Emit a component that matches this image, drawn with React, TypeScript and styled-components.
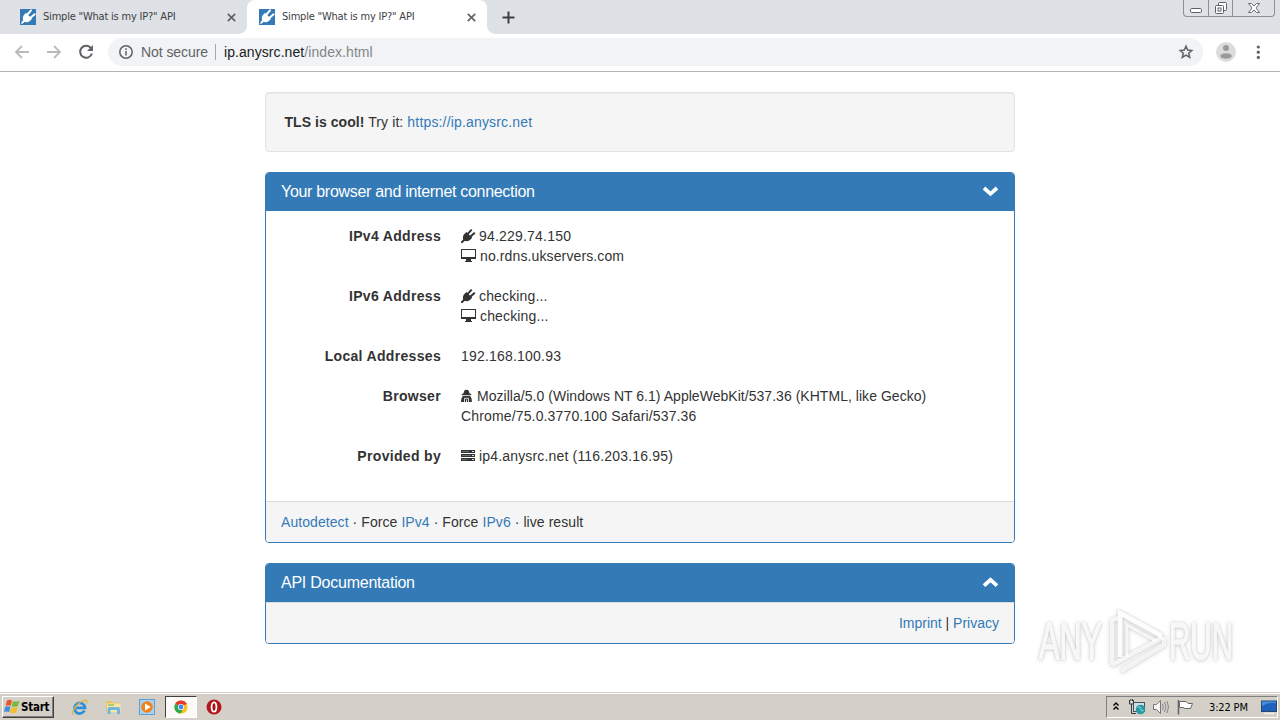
import React from "react";
import styled, { createGlobalStyle } from "styled-components";

const GlobalStyle = createGlobalStyle`
  * {
    box-sizing: border-box;
  }

  body {
    margin: 0;
    background: #fff;
    font-family: "Liberation Sans", Arial, sans-serif;
    font-size: 14px;
    line-height: 20px;
    color: #333;
    overflow: hidden;
  }

  svg {
    display: block;
    flex: none;
  }
`;

const Screen = styled.div`
  position: relative;
  display: flex;
  flex-direction: column;
  width: 1280px;
  height: 720px;
`;

/* ====== browser chrome ====== */

const TabStrip = styled.div`
  display: flex;
  height: 34px;
  padding-left: 8px;
  background: #dee1e6;
`;

const TabBox = styled.div<{ $active?: boolean }>`
  position: relative;
  display: flex;
  align-items: center;
  width: ${(p) => (p.$active ? 240 : 239)}px;
  padding: 0 11px 0 12px;
  border-radius: 8px 8px 0 0;
  background: ${(p) => (p.$active ? "#fff" : "transparent")};

  &::before,
  &::after {
    content: "";
    display: ${(p) => (p.$active ? "block" : "none")};
    position: absolute;
    bottom: 0;
    width: 8px;
    height: 8px;
  }

  &::before {
    left: -8px;
    background: radial-gradient(circle at 0 0, transparent 7.5px, #fff 8px);
  }

  &::after {
    right: -8px;
    background: radial-gradient(circle at 100% 0, transparent 7.5px, #fff 8px);
  }
`;

const TabTitle = styled.span`
  flex: 1;
  margin-left: 7px;
  font-family: "DejaVu Sans Condensed", "DejaVu Sans", sans-serif;
  font-stretch: condensed;
  font-size: 11px;
  letter-spacing: -0.2px;
  white-space: nowrap;
  color: #3c4043;
`;

const NewTab = styled.div`
  display: flex;
  align-items: center;
  margin-left: 15px;
`;

const WindowButtons = styled.div`
  display: flex;
  width: 92px;
  height: 17px;
  margin: 0 5px 0 auto;
  border: 1px solid #8b8f98;
  border-top: 0;
  border-radius: 0 0 4px 4px;
`;

const WindowButton = styled.div<{ $width: number }>`
  display: flex;
  justify-content: center;
  width: ${(p) => p.$width}px;
  border-right: 1px solid #8b8f98;

  &:last-child {
    border-right: 0;
  }
`;

const Toolbar = styled.div`
  display: flex;
  align-items: center;
  height: 38px;
  padding: 0 12px 1px 13px;
  border-bottom: 1px solid #b3b4b6;
  background: #fff;
`;

const NavButtons = styled.div`
  display: flex;
  gap: 14px;
  width: 95px;
`;

const Omnibox = styled.div`
  display: flex;
  align-items: center;
  width: 1095px;
  height: 28px;
  padding: 0 9px 0 10px;
  border-radius: 14px;
  background: #f1f3f4;
`;

const Security = styled.span`
  width: 75px;
  margin-left: 7px;
  border-right: 1px solid #a5a8ab;
  line-height: 16px;
  letter-spacing: -0.07px;
  color: #5f6368;
`;

const Url = styled.span`
  flex: 1;
  margin-left: 8px;
  letter-spacing: 0.07px;
  color: #80868b;

  b {
    font-weight: 400;
    color: #202124;
  }
`;

const ToolbarEnd = styled.div`
  display: flex;
  align-items: center;
  gap: 12px;
  margin-left: 13px;
`;

/* ====== page ====== */

const Page = styled.main`
  flex: 1;
  display: flex;
  flex-direction: column;
  gap: 20px;
  width: 750px;
  margin: 0 auto;
  padding-top: 20px;
`;

const Well = styled.div`
  height: 60px;
  padding: 19px 18.5px;
  border: 1px solid #e3e3e3;
  border-radius: 4px;
  background: #f5f5f5;
  box-shadow: inset 0 1px 1px rgba(0, 0, 0, 0.05);
  letter-spacing: 0.1px;

  strong {
    letter-spacing: 0.05px;
  }

  a {
    letter-spacing: 0.17px;
  }
`;

const Panel = styled.section`
  border: 1px solid #337ab7;
  border-radius: 4px;
  overflow: hidden;
`;

const PanelHeading = styled.div`
  display: flex;
  align-items: center;
  justify-content: space-between;
  height: 38px;
  padding: 0 15px;
  background: #337ab7;
  color: #fff;
`;

const PanelTitle = styled.h3<{ $spacing: number }>`
  margin: 0;
  font-size: 16px;
  font-weight: 400;
  letter-spacing: ${(p) => p.$spacing}px;
`;

const PanelBody = styled.dl`
  display: grid;
  grid-template-columns: 160px 1fr;
  gap: 20px;
  margin: 0;
  padding: 15px 15px 35px;
`;

const Term = styled.dt`
  text-align: right;
  font-weight: 700;
  letter-spacing: 0.32px;
`;

const Detail = styled.dd`
  margin: 0;
`;

const Line = styled.div<{ $spacing?: number }>`
  display: flex;
  align-items: center;
  height: 20px;
  letter-spacing: ${(p) => p.$spacing ?? 0.15}px;
  white-space: pre;
`;

const PanelFooter = styled.div<{ $right?: boolean; $spacing?: number }>`
  height: 41px;
  padding: 10px 15px;
  border-top: 1px solid #ddd;
  background: #f5f5f5;
  text-align: ${(p) => (p.$right ? "right" : "left")};
  letter-spacing: ${(p) => p.$spacing ?? 0}px;
`;

const Link = styled.a`
  color: #337ab7;
  text-decoration: none;
`;

/* ====== watermark ====== */

const Watermark = styled.div`
  position: absolute;
  left: 1039px;
  top: 609px;
  display: flex;
  align-items: center;
  height: 66px;
  color: #fff;
  filter: drop-shadow(0 0 1px rgba(0, 0, 0, 0.18))
    drop-shadow(0 1px 2px rgba(0, 0, 0, 0.16));
`;

const WatermarkWord = styled.span<{ $width: number; $scale: number }>`
  width: ${(p) => p.$width}px;
  font-size: 51px;
  line-height: 60px;
  transform: scaleX(${(p) => p.$scale});
  transform-origin: 0 50%;
  -webkit-text-stroke: 1.5px #fff;
  opacity: 0.85;
`;

/* ====== taskbar ====== */

const Taskbar = styled.footer`
  display: flex;
  align-items: center;
  height: 28px;
  padding: 2px 2px 1px 2px;
  border-top: 1px solid #d4d0c8;
  box-shadow: inset 0 1px 0 #fff;
  background: #d4d0c8;
`;

const StartButton = styled.div`
  display: flex;
  align-items: center;
  gap: 1px;
  width: 52px;
  height: 22px;
  padding-left: 1px;
  border: 1px solid;
  border-color: #fff #404040 #404040 #fff;
  box-shadow: inset -1px -1px 0 #808080;
  font: bold 11.5px "DejaVu Sans Condensed", "DejaVu Sans", sans-serif;
  font-stretch: condensed;
  letter-spacing: -0.25px;
  color: #000;
`;

const QuickLaunch = styled.div`
  display: flex;
  align-items: center;
  margin-left: 9px;
`;

const LaunchItem = styled.div<{ $pressed?: boolean }>`
  display: flex;
  align-items: center;
  justify-content: center;
  width: 33.6px;
  height: 22px;
  ${(p) =>
    p.$pressed &&
    `
    border: 1px solid;
    border-color: #404040 #fff #fff #404040;
    background: #fbfaf9;
    width: 32px;
    margin-left: 1px;
    margin-right: 0.5px;
  `}
`;

const Tray = styled.div`
  display: flex;
  align-items: center;
  width: 172px;
  height: 22px;
  margin-left: auto;
  padding-left: 4px;
  border: 1px solid;
  border-color: #808080 #fff #fff #808080;
`;

const Clock = styled.span`
  width: 41px;
  margin: 0 12px 0 14px;
  font: 11px "DejaVu Sans Condensed", "DejaVu Sans", sans-serif;
  font-stretch: condensed;
  letter-spacing: -0.15px;
  white-space: nowrap;
  color: #000;
`;

/* ====== icons ====== */

const Favicon = () => (
  <svg width="16" height="16" viewBox="0 0 16 16">
    <rect width="16" height="16" fill="#337ab7" />
    <path
      d="M1 14.6L3.6 12.2C2.2 9.6 2.6 7 5 4.8L6.2 4L12 9.8L10.6 11.2C8.6 13.2 6.4 13.8 4.4 12.8L1.6 15.2Z"
      fill="#fff"
    />
    <path d="M7 6L11 1.4M10 9.2L14.6 5.2" stroke="#fff" strokeWidth="2" strokeLinecap="round" />
    <path d="M2 13.8L5 11" stroke="#fff" strokeWidth="2" />
  </svg>
);

const PlugIcon = () => (
  <svg width="18" height="14" viewBox="0 0 18 14">
    <path d="M2.6 11.4C1.2 8.6 1.8 6 4.4 4L5.4 3L11.2 8.8L10 10C7.8 12.4 5.2 12.8 2.6 11.4Z" fill="#333" />
    <path
      d="M.8 13.2L3.6 10.6M6.6 5.2L10.2 1.2M9.2 7.8L13.2 4.2"
      stroke="#333"
      strokeWidth="2"
      strokeLinecap="round"
    />
  </svg>
);

const MonitorIcon = () => (
  <svg width="19" height="14" viewBox="0 0 19 14">
    <path d="M0 0H15V10H10V12H11V13H4V12H5V10H0ZM1 1V8H14V1Z" fill="#333" fillRule="evenodd" />
  </svg>
);

const AgentIcon = () => (
  <svg width="16" height="14" viewBox="0 0 16 14">
    <path
      d="M3.4 1.4Q4.4 .2 5.5 .9Q6.6 .2 7.6 1.4L8.6 4.4L10.2 5V6.3H.8V5L2.4 4.4Z"
      fill="#333"
    />
    <path d="M2 7H9Q10.9 8.4 10.9 13H.1Q.1 8.4 2 7Z" fill="#333" />
    <path d="M3 9.3H8M3.5 10V13M5.5 10.5V13M7.5 10V13" stroke="#fff" strokeWidth=".8" />
  </svg>
);

const ServerIcon = () => (
  <svg width="18" height="12" viewBox="0 0 18 12">
    <path d="M0 0H14V3H0ZM0 4H14V7H0ZM0 8H14V11H0Z" fill="#333" />
    <path d="M1 1.5H8M1 5.5H10M1 9.5H6" stroke="#777" strokeWidth=".8" />
    <path d="M11 1.5H13M11 5.5H13M11 9.5H13" stroke="#ddd" />
  </svg>
);

const Chevron = ({ up }: { up?: boolean }) => (
  <svg width="17" height="12" viewBox="0 0 17 12">
    <path
      d={up ? "M2 8.6L8.5 2.8L15 8.6" : "M2 2L8.5 7.8L15 2"}
      fill="none"
      stroke="#fff"
      strokeWidth="3.8"
    />
  </svg>
);

const CloseIcon = () => (
  <svg width="9" height="9" viewBox="0 0 9 9">
    <path d="M.8.8L8.2 8.2M8.2.8L.8 8.2" stroke="#5f6368" strokeWidth="1.7" />
  </svg>
);

const ArrowIcon = ({ right }: { right?: boolean }) => (
  <svg width="18" height="16" viewBox="0 0 18 16">
    <path
      d={right ? "M2 8H15M9 2L15 8L9 14" : "M16 8H3M9 2L3 8L9 14"}
      fill="none"
      stroke="#b9bbbe"
      strokeWidth="1.8"
    />
  </svg>
);

const ReloadIcon = () => (
  <svg width="18" height="16" viewBox="0 0 18 16">
    <path d="M14 4.2A6 6 0 1 0 14.9 9.5" fill="none" stroke="#5f6368" strokeWidth="2" />
    <path d="M16 1V7H10Z" fill="#5f6368" />
  </svg>
);

const InfoIcon = () => (
  <svg width="16" height="16" viewBox="0 0 16 16">
    <circle cx="8" cy="8" r="6.2" fill="none" stroke="#5f6368" strokeWidth="1.5" />
    <path d="M8 7V11.5M8 4.3V6" stroke="#5f6368" strokeWidth="1.5" />
  </svg>
);

const StarIcon = () => (
  <svg width="16" height="16" viewBox="0 0 16 16">
    <path
      d="M8 2.2L9.7 6.1L13.8 6.5L10.7 9.3L11.7 13.4L8 11.2L4.3 13.4L5.3 9.3L2.2 6.5L6.3 6.1Z"
      fill="none"
      stroke="#5f6368"
      strokeWidth="1.5"
    />
  </svg>
);

const Avatar = () => (
  <svg width="20" height="20" viewBox="0 0 20 20">
    <circle cx="10" cy="10" r="10" fill="#dcdcdc" />
    <circle cx="10" cy="6" r="3" fill="#9a9a9a" />
    <ellipse cx="10" cy="14" rx="5.8" ry="2.8" fill="#9a9a9a" />
  </svg>
);

const MenuIcon = () => (
  <svg width="20" height="16" viewBox="0 0 20 16">
    <circle cx="10.3" cy="3" r="1.6" fill="#5f6368" />
    <circle cx="10.3" cy="8.2" r="1.6" fill="#5f6368" />
    <circle cx="10.3" cy="13.4" r="1.6" fill="#5f6368" />
  </svg>
);

const PlayLogo = () => (
  <svg width="60" height="66" viewBox="0 0 60 66" fill="none" stroke="#fff">
    <path d="M11 48V4L53 27" strokeWidth="5" opacity=".95" />
    <path d="M18 48V16L47 32" strokeWidth="3" opacity=".8" />
    <path d="M3 56V11L9 9M3 56L54 28" strokeWidth="4.5" opacity=".8" />
    <path d="M12 62L55 36V28" strokeWidth="4.5" opacity=".75" />
  </svg>
);

const WindowsLogo = () => (
  <svg width="16" height="16" viewBox="0 0 16 16">
    <path d="M3 1.5Q5.5 0 8 1.5L6.8 6.8Q4.4 5.5 1.6 6.8Z" fill="#e8572a" />
    <path d="M9 2Q11.5 3.3 15.4 1.7L14 7Q10.6 8.5 7.8 7.2Z" fill="#7cb83a" />
    <path d="M1.3 7.8Q4 6.5 6.5 7.9L5.2 13Q2.6 11.8 0 13Z" fill="#3e8fd8" />
    <path d="M7.5 8.3Q10.4 9.5 13.7 8.1L12.3 13.5Q9 15 6.2 13.6Z" fill="#f5bd2a" />
  </svg>
);

const IeIcon = () => (
  <svg width="17" height="17" viewBox="0 0 17 17" fill="none">
    <path d="M13.5 11.5A5.3 5.3 0 1 1 14 8.8H5" stroke="#2b8fdc" strokeWidth="2.7" />
    <path d="M2.4 15.6C-.6 14 5 5 11.5 2C15 .4 16.8 1.5 15.3 4.5" stroke="#e2b63c" strokeWidth="1.3" />
  </svg>
);

const FolderIcon = () => (
  <svg width="17" height="16" viewBox="0 0 17 16">
    <path d="M1 2H6L7.5 3.5H14V13H1Z" fill="#e9c466" />
    <path d="M2 4.5H15.5V13H2Z" fill="#f9e7a1" />
    <path d="M2.5 15V10Q2.5 8 4.5 8H13Q15 8 15 10V15H12V11H5.5V15Z" fill="#6fb7dd" />
    <path d="M3 6H9" stroke="#62a95d" />
  </svg>
);

const MediaIcon = () => (
  <svg width="16" height="16" viewBox="0 0 16 16">
    <rect x=".5" y=".5" width="15" height="15" fill="#a9d2f1" stroke="#5b9fd6" />
    <circle cx="8" cy="8" r="5.8" fill="#f08218" />
    <path d="M6 4.5L11.8 8L6 11.5Z" fill="#fff" />
  </svg>
);

const ChromeIcon = () => (
  <svg width="14" height="14" viewBox="0 0 14 14">
    <circle cx="7" cy="7" r="6.6" fill="#fbc116" />
    <path d="M7 7L1.3 3.7A6.6 6.6 0 0 1 12.8 3.8Z" fill="#e33b2e" />
    <path d="M7 7L1.3 3.7A6.6 6.6 0 0 0 6.6 13.6L9.5 8.5Z" fill="#2da94f" />
    <circle cx="7" cy="7" r="3.1" fill="#fff" />
    <circle cx="7" cy="7" r="2.4" fill="#4285f4" />
  </svg>
);

const OperaIcon = () => (
  <svg width="16" height="16" viewBox="0 0 16 16">
    <circle cx="8" cy="8" r="7.5" fill="#b5161c" />
    <ellipse cx="8" cy="8" rx="2.4" ry="4.7" fill="#a90f14" stroke="#fff" strokeWidth="1.8" />
  </svg>
);

const TrayIcons = () => (
  <svg width="84" height="18" viewBox="0 0 84 18">
    <path d="M2.5 7.5L5 5L7.5 7.5M2.5 11.5L5 9L7.5 11.5" fill="none" stroke="#000" strokeWidth="1.4" />
    <rect x="22.5" y="4.5" width="11" height="9" fill="#cfe0ea" stroke="#44545d" />
    <path d="M18.5 2V6H22.5V2M19.8 1V3M21.5 1V3M20.5 6V15.5H25" fill="none" stroke="#3b3b3b" />
    <circle cx="29.5" cy="11.5" r="4.8" fill="#2c98a8" />
    <path d="M26.5 9.5Q29 7.5 30 10.5Q29 13.5 32.5 12.5" fill="none" stroke="#8be0cf" />
    <path d="M42.5 6.5H45.5L49.5 2.5V15.5L45.5 11.5H42.5Z" fill="#f6f6f6" stroke="#777" />
    <path d="M51.5 6Q53 9 51.5 12M53.5 4Q56.5 9 53.5 14M56 3Q59 9 56 15" fill="none" stroke="#888" />
    <path d="M67.5 2V16.5" stroke="#666" strokeWidth="1.6" />
    <path d="M68.5 3.5H75L77 5.5H81.5L79.5 10.5H74L72 9.5H68.5Z" fill="#fff" stroke="#666" />
  </svg>
);

const DesktopIcon = () => (
  <svg width="16" height="16" viewBox="0 0 16 16">
    <rect x=".5" y="2" width="15" height="10.5" fill="#1d62bd" stroke="#27456e" />
    <path d="M1 7Q7 3 15 4V2.5H1Z" fill="#478fdd" />
    <path d="M3 14.5H13" stroke="#eee" strokeWidth="1.5" />
  </svg>
);

/* ====== pieces ====== */

const Tab: React.FC<{ active?: boolean }> = ({ active }) => (
  <TabBox $active={active}>
    <Favicon />
    <TabTitle>Simple "What is my IP?" API</TabTitle>
    <CloseIcon />
  </TabBox>
);

const Browser: React.FC = () => (
  <header>
    <TabStrip>
      <Tab />
      <Tab active />
      <NewTab>
        <svg width="13" height="13" viewBox="0 0 13 13">
          <path d="M6.5.5V12.5M.5 6.5H12.5" stroke="#3c4043" strokeWidth="2" />
        </svg>
      </NewTab>
      <WindowButtons>
        <WindowButton $width={25}>
          <svg width="14" height="16" viewBox="0 0 14 16">
            <rect x="1.5" y="8.5" width="11" height="4" rx="1.2" fill="#fff" stroke="#5a5f69" />
          </svg>
        </WindowButton>
        <WindowButton $width={25}>
          <svg width="14" height="16" viewBox="0 0 14 16" fill="#fff" stroke="#5a5f69">
            <rect x="4.5" y="2.5" width="8" height="8" rx="1" />
            <rect x="1.5" y="5.5" width="8" height="8" rx="1" />
            <rect x="4" y="8" width="3" height="3" />
          </svg>
        </WindowButton>
        <WindowButton $width={41}>
          <svg width="14" height="16" viewBox="0 0 14 16">
            <path
              d="M1.5 3.5H4.5L7 6L9.5 3.5H12.5L9 8L12.5 12.5H9.5L7 10L4.5 12.5H1.5L5 8Z"
              fill="#fff"
              stroke="#5a5f69"
              strokeWidth=".9"
            />
          </svg>
        </WindowButton>
      </WindowButtons>
    </TabStrip>
    <Toolbar>
      <NavButtons>
        <ArrowIcon />
        <ArrowIcon right />
        <ReloadIcon />
      </NavButtons>
      <Omnibox>
        <InfoIcon />
        <Security>Not secure</Security>
        <Url>
          <b>ip.anysrc.net</b>/index.html
        </Url>
        <StarIcon />
      </Omnibox>
      <ToolbarEnd>
        <Avatar />
        <MenuIcon />
      </ToolbarEnd>
    </Toolbar>
  </header>
);

const ConnectionPanel: React.FC = () => (
  <Panel>
    <PanelHeading>
      <PanelTitle $spacing={-0.3}>Your browser and internet connection</PanelTitle>
      <Chevron />
    </PanelHeading>
    <PanelBody>
      <Term>IPv4 Address</Term>
      <Detail>
        <Line $spacing={0.2}>
          <PlugIcon />
          94.229.74.150
        </Line>
        <Line $spacing={0.12}>
          <MonitorIcon />
          no.rdns.ukservers.com
        </Line>
      </Detail>
      <Term>IPv6 Address</Term>
      <Detail>
        <Line>
          <PlugIcon />
          checking...
        </Line>
        <Line>
          <MonitorIcon />
          checking...
        </Line>
      </Detail>
      <Term>Local Addresses</Term>
      <Detail>
        <Line $spacing={0.2}>192.168.100.93</Line>
      </Detail>
      <Term>Browser</Term>
      <Detail>
        <Line $spacing={0.035}>
          <AgentIcon />
          Mozilla/5.0 (Windows NT 6.1) AppleWebKit/537.36 (KHTML, like Gecko)
        </Line>
        <Line>Chrome/75.0.3770.100 Safari/537.36</Line>
      </Detail>
      <Term>Provided by</Term>
      <Detail>
        <Line $spacing={0.17}>
          <ServerIcon />
          ip4.anysrc.net (116.203.16.95)
        </Line>
      </Detail>
    </PanelBody>
    <PanelFooter $spacing={0.07}>
      <Link>Autodetect</Link> · Force <Link>IPv4</Link> · Force <Link>IPv6</Link> · live result
    </PanelFooter>
  </Panel>
);

const App: React.FC = () => (
  <Screen>
    <GlobalStyle />
    <Browser />
    <Page>
      <Well>
        <strong>TLS is cool!</strong> Try it: <Link>https://ip.anysrc.net</Link>
      </Well>
      <ConnectionPanel />
      <Panel>
        <PanelHeading>
          <PanelTitle $spacing={-0.24}>API Documentation</PanelTitle>
          <Chevron up />
        </PanelHeading>
        <PanelFooter $right>
          <Link>Imprint</Link> | <Link>Privacy</Link>
        </PanelFooter>
      </Panel>
    </Page>
    <Watermark>
      <WatermarkWord $width={70} $scale={0.6}>ANY</WatermarkWord>
      <PlayLogo />
      <WatermarkWord $width={65} $scale={0.58}>RUN</WatermarkWord>
    </Watermark>
    <Taskbar>
      <StartButton>
        <WindowsLogo />
        Start
      </StartButton>
      <QuickLaunch>
        <LaunchItem>
          <IeIcon />
        </LaunchItem>
        <LaunchItem>
          <FolderIcon />
        </LaunchItem>
        <LaunchItem>
          <MediaIcon />
        </LaunchItem>
        <LaunchItem $pressed>
          <ChromeIcon />
        </LaunchItem>
        <LaunchItem>
          <OperaIcon />
        </LaunchItem>
      </QuickLaunch>
      <Tray>
        <TrayIcons />
        <Clock>3:22 PM</Clock>
        <DesktopIcon />
      </Tray>
    </Taskbar>
  </Screen>
);

export default App;
